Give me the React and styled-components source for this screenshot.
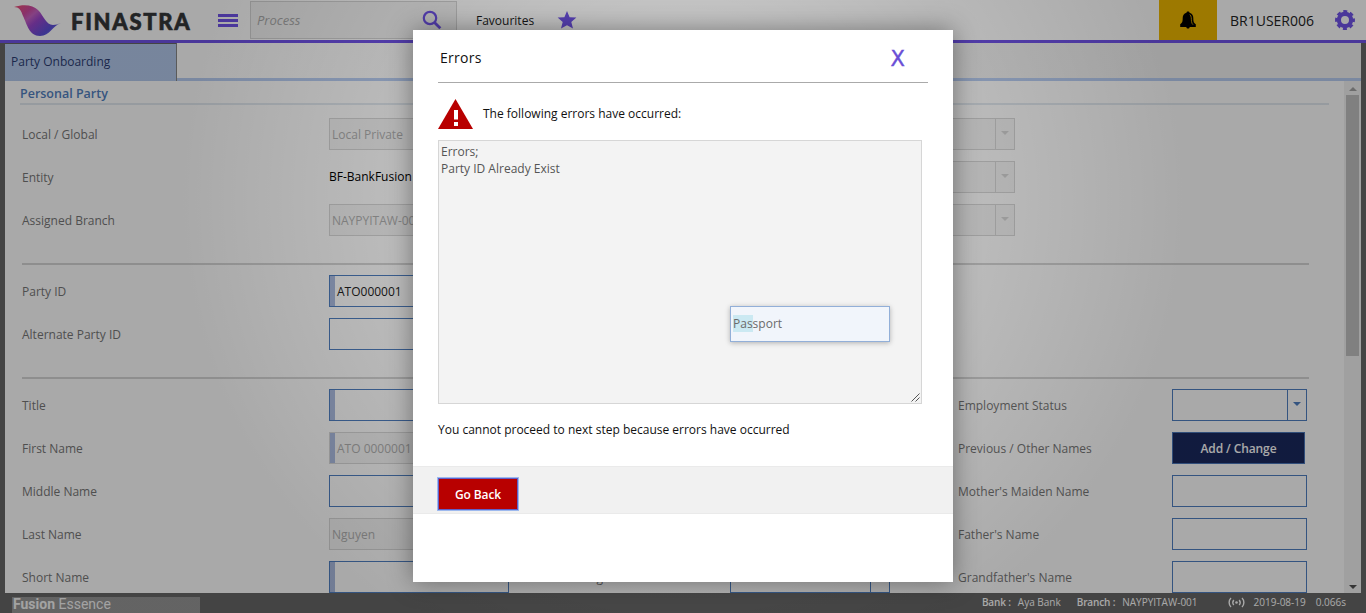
import React from 'react';
import styled, { createGlobalStyle, css } from 'styled-components';

const GlobalStyle = createGlobalStyle`
  * { box-sizing: border-box; }
  body { margin: 0; font-family: 'Open Sans', 'Noto Sans', sans-serif; font-size: 12px; color: #111; overflow: hidden; }
  p, h1, h2 { margin: 0; font-weight: 400; }
`;

const Page = styled.div`
  height: 613px;
  display: flex;
  flex-direction: column;
  background: #666;
  overflow: hidden;
`;

const Header = styled.header`
  height: 43px;
  flex: none;
  display: flex;
  align-items: center;
  background: #fff;
  border-bottom: 3px solid #7053e8;
`;
const Wave = styled.svg`
  margin-left: 14px;
  width: 48px;
  height: 32px;
  flex: none;
`;
const Brand = styled.div`
  width: 147px;
  padding-left: 9px;
  font: 900 22px/40px Lato, sans-serif;
  letter-spacing: 1.7px;
  color: #333638;
  -webkit-text-stroke: 0.6px #333638;
  white-space: nowrap;
  margin-top: 3px;
`;
const Burger = styled.div`
  margin-left: 9px;
  width: 20px;
  height: 13px;
  border: solid #7053e8;
  border-width: 3px 0;
  display: flex;
  align-items: center;
  &::before { content: ''; width: 100%; height: 3px; background: #7053e8; }
`;
const Search = styled.div`
  margin-left: 12px;
  width: 207px;
  height: 38px;
  display: flex;
  align-items: center;
  justify-content: space-between;
  padding: 0 14px 0 6px;
  background: #f3f3f3;
  border: 1px solid #d4d4d4;
  color: #aaa;
  font-size: 13px;
  font-style: italic;
`;
const Favourites = styled.div`
  margin-left: 19px;
  display: flex;
  align-items: center;
  gap: 23px;
  color: #1c1c1c;
  font-size: 12px;
`;
const Alerts = styled.div`
  margin-left: auto;
  width: 58px;
  height: 40px;
  display: flex;
  align-items: center;
  justify-content: center;
  background: #edb600;
`;
const User = styled.div`
  width: 118px;
  padding-left: 13px;
  font-size: 14px;
  color: #222;
`;
const Gear = styled.svg`
  width: 20px;
  height: 20px;
  margin-right: 11px;
`;

const Workspace = styled.main`
  height: 550px;
  flex: none;
  margin: 0 5px;
  background: #fff;
  display: flex;
  flex-direction: column;
`;
const TabBar = styled.div`
  height: 38px;
  flex: none;
  display: flex;
  background: linear-gradient(90deg, #fff 15%, #f1f1f1 85%);
  border-bottom: 3px solid #b8cdf2;
`;
const Tab = styled.div`
  width: 172px;
  height: 38px;
  padding-left: 6px;
  line-height: 36px;
  font-size: 12px;
  color: #2b3c72;
  background: #b3c9ec;
  border-top: 1px solid #666;
  border-right: 1px solid #888;
`;
const Content = styled.div`
  flex: 1;
  min-height: 0;
  display: flex;
`;
const Form = styled.div`
  flex: 1;
  overflow: hidden;
`;
const FormTitle = styled.h1`
  margin: 0 15px 13px;
  height: 24px;
  line-height: 25px;
  font-size: 12.5px;
  font-weight: 600;
  color: #527fc0;
  border-bottom: 2px solid #e2e9f0;
`;
const Section = styled.section`
  margin: 0 35px 0 17px;
  padding-bottom: 27px;
  & + & { border-top: 2px solid #d6d6d6; padding-top: 10px; }
`;
const Row = styled.div`
  display: grid;
  grid-template-columns: 307px 228px 173px 228px 214px 135px;
  height: 32px;
  align-items: center;
  & + & { margin-top: 11px; }
`;
const Label = styled.label`
  color: #777;
  white-space: nowrap;
`;
const Field = styled.div`
  width: ${p => p.$w}px;
  height: 32px;
  padding-left: ${p => (p.$required ? 1 : 2)}px;
  display: flex;
  align-items: center;
  white-space: nowrap;
  color: #222;
  border: 1px solid #4f7fc1;
  ${p => p.$required && css`&::before { content: ''; width: 5px; height: 30px; margin: 0 2px 0 -1px; background: #abbbe0; }`}
  ${p => p.$disabled && css`background: #f6f6f6; border-color: #d8d8d8; color: #b0b0b0;`}
`;
const Arrow = styled.div`
  margin-left: auto;
  width: 19px;
  height: 30px;
  display: flex;
  align-items: center;
  justify-content: center;
  padding-bottom: 2px;
  border-left: 1px solid ${p => (p.$disabled ? '#d8d8d8' : '#4f7fc1')};
  &::before { content: ''; border: 4.5px solid transparent; border-bottom: 0; border-top-color: ${p => (p.$disabled ? '#d5d5d5' : '#4f7fc1')}; }
`;
const Plain = styled.span`
  color: #000;
  padding-bottom: 2px;
`;
const NavyButton = styled.button`
  width: 133px;
  height: 32px;
  padding: 0;
  font: 600 12px 'Open Sans', sans-serif;
  letter-spacing: -0.1px;
  color: #fff;
  background: #19285e;
  border: 1px solid #4a76b8;
`;

const ScrollTrack = styled.div`
  width: 17px;
  height: 512px;
  padding: 6px 2px 4px;
  display: flex;
  flex-direction: column;
  align-items: center;
  background: #f1f1f1;
`;
const Thumb = styled.div`
  width: 13px;
  height: 261px;
  margin: 4px 0 auto;
  background: #c1c1c1;
`;
const Caret = styled.div`
  border: 4px solid transparent;
  ${p => (p.$up ? css`border-top: 0; border-bottom-color: #a3a3a3;` : css`border-bottom: 0; border-top-color: #505050;`)}
`;

const StatusBar = styled.footer`
  height: 20px;
  flex: none;
  display: flex;
  align-items: center;
  padding: 0 20px 0 12px;
  color: #fff;
  font-size: 10px;
  white-space: nowrap;
`;
const Product = styled.div`
  align-self: flex-end;
  width: 188px;
  height: 16px;
  padding-left: 1px;
  font: 14px/15px Roboto, sans-serif;
  color: #f5f5f5;
  background: #969696;
`;
const Status = styled.span`
  margin-left: ${p => p.$gap}px;
  padding-bottom: 2px;
  b { font-weight: 600; letter-spacing: -0.15px; }
  &:first-of-type { margin-left: auto; }
`;
const Signal = styled.svg`
  width: 17px;
  height: 11px;
  margin: 0 0 1px 30px;
`;

const Scrim = styled.div`
  position: absolute;
  inset: 0;
  height: 613px;
  background: radial-gradient(circle 500px at 683px 200px, rgba(0, 0, 0, 0.17), rgba(0, 0, 0, 0.338));
`;
const Dialog = styled.section`
  position: absolute;
  left: 413px;
  top: 30px;
  width: 540px;
  height: 552px;
  background: #fff;
  box-shadow: 0 0 24px rgba(0, 0, 0, 0.4);
`;
const DialogHead = styled.div`
  height: 53px;
  margin: 0 25px;
  padding: 2px 23px 0 2px;
  display: flex;
  align-items: center;
  justify-content: space-between;
  border-bottom: 1px solid #aaa;
`;
const DialogTitle = styled.h2`
  font-size: 14px;
  letter-spacing: 0.3px;
`;
const Close = styled.span`
  font-family: 'DejaVu Sans', sans-serif;
  font-size: 21px;
  line-height: 20px;
  -webkit-text-stroke: 0.4px #694ed6;
  color: #694ed6;
  padding-top: 4px;
`;
const Intro = styled.div`
  height: 57px;
  padding: 5px 0 0 25px;
  display: flex;
  align-items: center;
  gap: 10px;
  p { padding-bottom: 1px; }
`;
const Messages = styled.div`
  width: 484px;
  height: 264px;
  margin-left: 25px;
  padding: 2px;
  position: relative;
  line-height: 17px;
  color: #555;
  background: #f3f3f3;
  border: 1px solid #d6d6d6;
  svg { position: absolute; right: 1px; bottom: 1px; }
`;
const Notice = styled.p`
  height: 62px;
  padding: 16px 25px 0;
  line-height: 19px;
`;
const DialogActions = styled.div`
  height: 48px;
  padding: 11px 25px 0;
  background: #f1f1f1;
  border: solid #eaeaea;
  border-width: 1px 0;
`;
const RedButton = styled.button`
  display: block;
  width: 80px;
  height: 32px;
  padding: 0;
  font: 600 12px 'Open Sans', sans-serif;
  letter-spacing: -0.1px;
  color: #fff;
  background: #b80000;
  border: 1px solid #5f5fc8;
  box-shadow: 0 0 0 1px #9db9ee;
`;
const Option = styled.div`
  position: absolute;
  left: 730px;
  top: 306px;
  width: 160px;
  height: 36px;
  padding-left: 2px;
  line-height: 34px;
  color: #6b6b6b;
  background: #f1f5fb;
  border: 1px solid #92afd8;
  box-shadow: 0 1px 5px rgba(0, 0, 0, 0.28);
  mark { color: inherit; background: #cbe9f2; padding: 0; }
`;

const Select = ({ w, disabled, required, children }) => (
  <Field $w={w} $disabled={disabled} $required={required}>
    {children}
    <Arrow $disabled={disabled} />
  </Field>
);

export default function App() {
  return (
    <>
      <GlobalStyle />
      <Page>
        <Header>
          <Wave viewBox="0 0 48 32">
            <defs>
              <linearGradient id="wave" x1="0" y1="0" x2="1" y2="0.75">
                <stop offset="0" stopColor="#f05070" />
                <stop offset="0.28" stopColor="#cf4aa0" />
                <stop offset="0.4" stopColor="#c863c4" />
                <stop offset="0.55" stopColor="#9a45cc" />
                <stop offset="0.85" stopColor="#5a4fd8" />
                <stop offset="1" stopColor="#6b62ee" />
              </linearGradient>
            </defs>
            <path d="M0 3C10 0 19 1 24 6C30 12 32 21 39 21C42 21 44 20 47 19C39 21 36 32 26 32C15 32 13 20 9 12C7 6 5 3 0 3Z" fill="url(#wave)" />
          </Wave>
          <Brand>FINASTRA</Brand>
          <Burger />
          <Search>
            Process
            <svg width="20" height="20" viewBox="0 0 20 20" fill="none" stroke="#7053e8" strokeWidth="2.2">
              <circle cx="8" cy="8" r="6.2" />
              <path d="M12.5 12.5L18.3 18.3" strokeWidth="2.8" />
            </svg>
          </Search>
          <Favourites>
            Favourites
            <svg width="20" height="20" viewBox="0 0 20 20" fill="#7053e8">
              <path d="M10 1L12.6 7.2L19.4 7.6L14.3 12L16 18.6L10 15.2L4 18.6L5.700 12L0.600 7.600L7.400 7.200Z" />
            </svg>
          </Favourites>
          <Alerts>
            <svg width="16" height="18" viewBox="0 0 16 18">
              <path d="M8 0.500C9 0.500 9.500 1 9.500 1.700C12.200 2.500 13.300 4.500 13.300 7C13.300 11 14 12 15.800 13.300V16H9.700C9.500 17 9 17.500 8 17.500C7 17.500 6.500 17 6.300 16H0.200V13.300C2 12 2.700 11 2.700 7C2.700 4.500 3.800 2.500 6.500 1.700C6.500 1 7 0.500 8 0.500Z" />
              <path d="M9.800 3.600C11.700 5 11.200 8 11.500 10.500C11.600 12 12.300 13 13 13.700" fill="none" stroke="#edb600" strokeWidth="0.8" />
            </svg>
          </Alerts>
          <User>BR1USER006</User>
          <Gear viewBox="0 0 20 20" fill="none" stroke="#7053e8">
            <circle cx="10" cy="10" r="6.100" strokeWidth="4.200" />
            <circle cx="10" cy="10" r="8.700" strokeWidth="2.500" strokeDasharray="4 2.833" strokeDashoffset="2" />
          </Gear>
        </Header>

        <Workspace>
          <TabBar>
            <Tab>Party Onboarding</Tab>
          </TabBar>
          <Content>
            <Form>
              <FormTitle>Personal Party</FormTitle>
              <Section>
                <Row>
                  <Label>Local / Global</Label>
                  <Field $w={180} $disabled>Local Private</Field>
                  <span />
                  <span><Select w={285} disabled /></span>
                </Row>
                <Row>
                  <Label>Entity</Label>
                  <Plain>BF-BankFusion</Plain>
                  <span />
                  <span><Select w={285} disabled /></span>
                </Row>
                <Row>
                  <Label>Assigned Branch</Label>
                  <Field $w={180} $disabled>NAYPYITAW-001</Field>
                  <span />
                  <span><Select w={285} disabled /></span>
                </Row>
              </Section>
              <Section>
                <Row>
                  <Label>Party ID</Label>
                  <Field $w={180} $required>ATO000001</Field>
                </Row>
                <Row>
                  <Label>Alternate Party ID</Label>
                  <Field $w={180} />
                </Row>
              </Section>
              <Section>
                <Row>
                  <Label>Title</Label>
                  <Select w={180} required />
                  <span /><span />
                  <Label>Employment Status</Label>
                  <Select w={135} />
                </Row>
                <Row>
                  <Label>First Name</Label>
                  <Field $w={180} $disabled $required>ATO 0000001</Field>
                  <span /><span />
                  <Label>Previous / Other Names</Label>
                  <NavyButton>Add / Change</NavyButton>
                </Row>
                <Row>
                  <Label>Middle Name</Label>
                  <Field $w={180} />
                  <span /><span />
                  <Label>Mother's Maiden Name</Label>
                  <Field $w={135} />
                </Row>
                <Row>
                  <Label>Last Name</Label>
                  <Field $w={180} $disabled>Nguyen</Field>
                  <span /><span />
                  <Label>Father's Name</Label>
                  <Field $w={135} />
                </Row>
                <Row>
                  <Label>Short Name</Label>
                  <Field $w={180} $required />
                  <Label>Housing</Label>
                  <Select w={160} />
                  <Label>Grandfather's Name</Label>
                  <Field $w={135} />
                </Row>
              </Section>
            </Form>
            <ScrollTrack>
              <Caret $up />
              <Thumb />
              <Caret />
            </ScrollTrack>
          </Content>
        </Workspace>

        <StatusBar>
          <Product><b>Fusion</b> Essence</Product>
          <Status><b>Bank :</b></Status>
          <Status $gap={7}>Aya Bank</Status>
          <Status $gap={16}><b>Branch :</b></Status>
          <Status $gap={7}>NAYPYITAW-001</Status>
          <Signal viewBox="0 0 17 11" fill="none" stroke="#fff" strokeWidth="1.4">
            <path d="M3 1C0.500 3.500 0.500 7.500 3 10M14 1C16.500 3.500 16.500 7.500 14 10M5.800 3C4.600 4.500 4.600 6.500 5.800 8M11.200 3C12.400 4.500 12.400 6.500 11.200 8" />
            <circle cx="8.500" cy="5.500" r="1.300" fill="#fff" stroke="none" />
          </Signal>
          <Status $gap={9}>2019-08-19</Status>
          <Status $gap={10}>0.066s</Status>
        </StatusBar>
      </Page>

      <Scrim />
      <Dialog>
        <DialogHead>
          <DialogTitle>Errors</DialogTitle>
          <Close>X</Close>
        </DialogHead>
        <Intro>
          <svg width="35" height="30" viewBox="0 0 35 30">
            <path d="M17.500 0L35 30H0Z" fill="#b80000" />
            <path d="M16 11H20V20.500H16ZM16 23H20V27H16Z" fill="#fff" />
          </svg>
          <p>The following errors have occurred:</p>
        </Intro>
        <Messages>
          Errors;<br />Party ID Already Exist
          <svg width="9" height="9" viewBox="0 0 9 9" stroke="#555" strokeWidth="1">
            <path d="M0.500 8.500L8.500 0.500M4.500 8.500L8.500 4.500" />
          </svg>
        </Messages>
        <Notice>You cannot proceed to next step because errors have occurred</Notice>
        <DialogActions>
          <RedButton>Go Back</RedButton>
        </DialogActions>
      </Dialog>
      <Option><mark>Pas</mark>sport</Option>
    </>
  );
}
